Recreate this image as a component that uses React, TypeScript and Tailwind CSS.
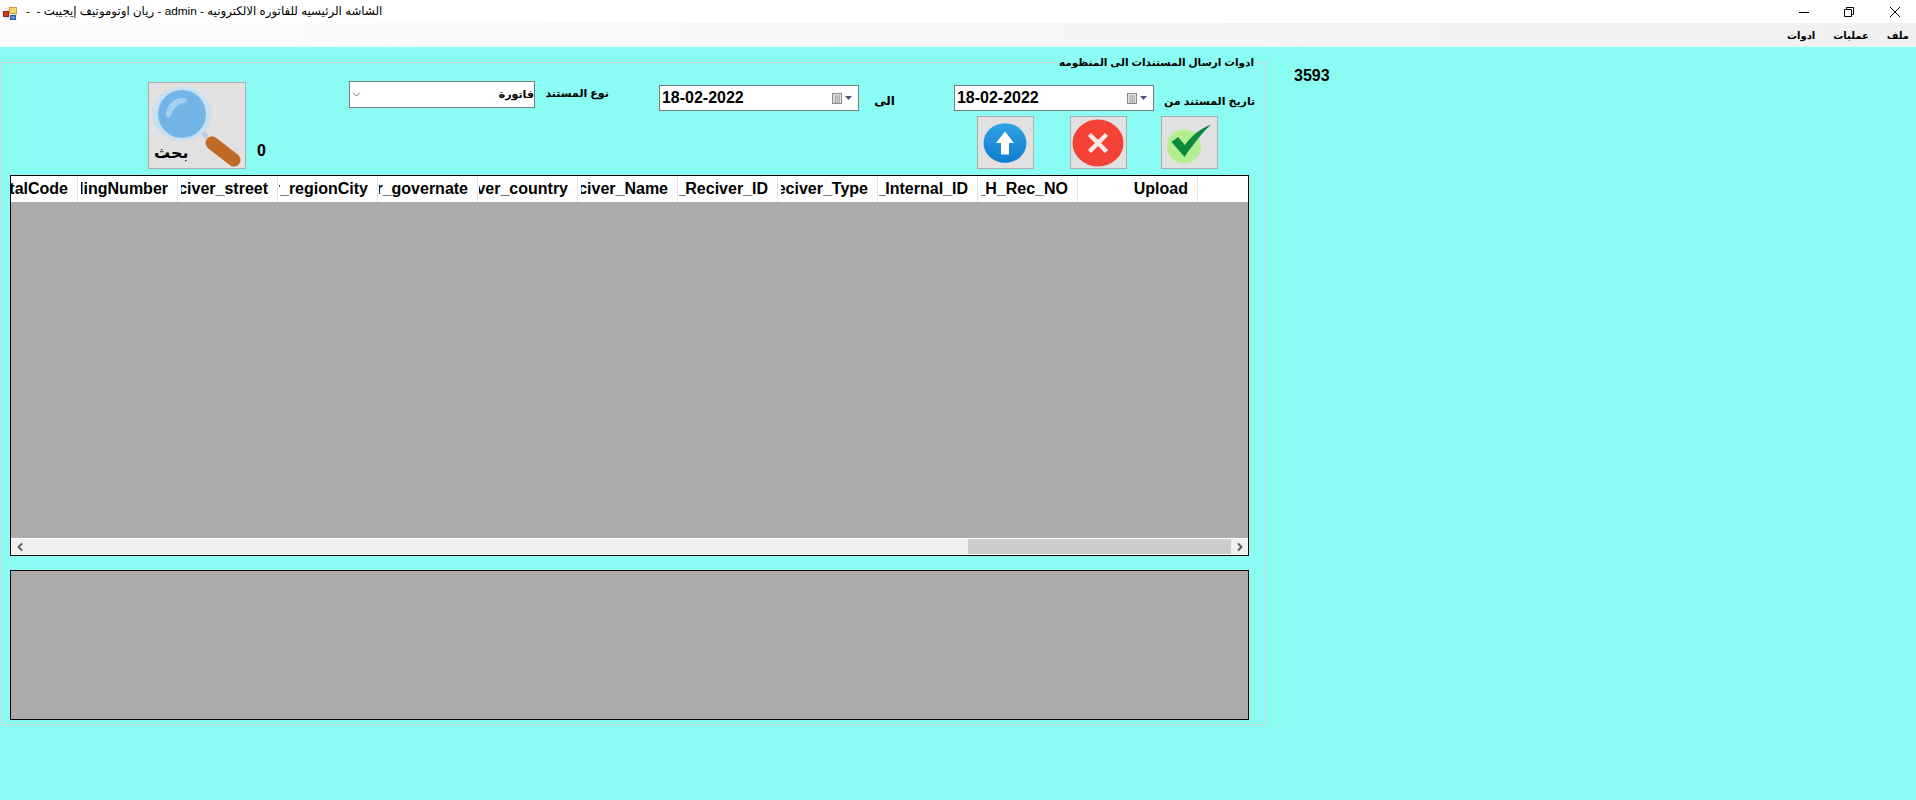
import { ChevronDown, ChevronLeft, ChevronRight } from 'lucide-react';

const font = 'font-["Liberation_Sans","DejaVu_Sans",sans-serif]';

const columns = [
    { label: 'Reciver_postalCode', width: 'w-[67px]', inset: 'pl-0' },
    { label: 'Reciver_buildingNumber', width: 'w-[100px]', inset: 'pl-[3px]' },
    { label: 'Reciver_street', width: 'w-[100px]', inset: 'pl-[3px]' },
    { label: 'Reciver_regionCity', width: 'w-[100px]', inset: 'pl-[1px]' },
    { label: 'Reciver_governate', width: 'w-[100px]', inset: 'pl-[1px]' },
    { label: 'Reciver_country', width: 'w-[100px]', inset: 'pl-[1px]' },
    { label: 'Reciver_Name', width: 'w-[100px]', inset: 'pl-[3px]' },
    { label: 'H_Reciver_ID', width: 'w-[100px]', inset: 'pl-[1px]' },
    { label: 'H_Reciver_Type', width: 'w-[100px]', inset: 'pl-[3px]' },
    { label: 'H_Internal_ID', width: 'w-[100px]', inset: 'pl-[1px]' },
    { label: 'H_H_Rec_NO', width: 'w-[100px]', inset: 'pl-[3px]' },
    { label: 'Upload', width: 'w-[120px]', inset: 'pl-[3px]' },
];

const AppIcon = () => (
    <svg width="16" height="16" viewBox="0 0 16 16" className="shrink-0">
        <rect x="2.5" y="3.5" width="12" height="12" fill="#e8e8e8" />
        <rect x="7.5" y="3.5" width="7" height="6" fill="#f5d76a" stroke="#c9a23c" />
        <rect x="1.5" y="7.5" width="5" height="5" fill="#d9352c" stroke="#8c2a24" />
        <rect x="8.5" y="11.5" width="5" height="4" fill="#5a8fe0" stroke="#2d5ba0" />
    </svg>
);

const DatePicker = () => (
    <div className="w-[200px] h-[26px] bg-white border border-[#7a7a7a] flex items-center justify-between pl-[2px] pr-[6px] text-[16px] font-bold text-black">
        <span>18-02-2022</span>
        <span className="flex items-center gap-[3px]">
            <svg width="10" height="11" viewBox="0 0 10 11">
                <rect x="0.5" y="0.5" width="9" height="10" fill="#e4e4e4" stroke="#8a8a8a" />
                <path d="M2 3h6M2 5h6M2 7h6M2 9h6M3.5 2v8M5.5 2v8M7.5 2v8" stroke="#a8a8a8" strokeWidth="0.8" />
            </svg>
            <svg width="7" height="4" viewBox="0 0 7 4">
                <path d="M0 0h7L3.5 4z" fill="#4a5a78" />
            </svg>
        </span>
    </div>
);

const ToolButton = ({ children, className }: { children: React.ReactNode, className?: string }) => (
    <button className={`w-[57px] h-[53px] bg-[#e1e1e1] border border-[#adadad] flex items-center justify-center ${className ?? ''}`}>
        {children}
    </button>
);

export default function App() {
    return (
        <div className={`${font} w-[1916px] h-[800px] flex flex-col overflow-hidden bg-[#8afcf4]`}>
            {/* title bar */}
            <div className="h-[23px] bg-white flex items-center pl-[2px]">
                <AppIcon />
                <div dir="rtl" className="ml-[8px] text-[11.8px] text-black whitespace-pre">
                    الشاشه الرئيسيه للفاتوره الالكترونيه - admin - ريان اوتوموتيف إيجيبت -  -
                </div>
                <div className="ml-auto flex items-center h-full pr-[16px]">
                    <svg width="10" height="10" viewBox="0 0 10 10"><path d="M0 5.5h10" stroke="#000" /></svg>
                    <svg width="10" height="10" viewBox="0 0 10 10" fill="none" className="ml-[35px]">
                        <path d="M2.5 2.5V.5h7v7h-2M.5 2.5h7v7h-7z" stroke="#000" />
                    </svg>
                    <svg width="10" height="10" viewBox="0 0 10 10" className="ml-[36px]"><path d="M0 0l10 10M10 0L0 10" stroke="#000" /></svg>
                </div>
            </div>

            {/* menu */}
            <div dir="rtl" className="h-[24px] bg-gradient-to-l from-[#f0f0f0] to-[#fcfcfc] flex items-center pr-[7px] gap-[18px] text-[10px] font-bold text-black">
                <span>ملف</span>
                <span>عمليات</span>
                <span>ادوات</span>
            </div>

            <div className="flex-1 flex items-start pt-[15px] pl-[1px]">
                {/* group box */}
                <div className="relative w-[1265px] h-[663px] border border-[#cfd8d8] flex flex-col pl-[8px]">
                    <div dir="rtl" className="absolute right-[9px] -top-[8px] bg-[#8afcf4] px-[2px] text-[10.5px] font-bold text-black whitespace-nowrap">
                        ادوات ارسال المستندات الى المنظومه
                    </div>

                    <div className="h-[112px] flex items-start text-black">
                        <button className="mt-[19px] ml-[138px] w-[98px] h-[87px] bg-[#e1e1e1] border border-[#adadad] relative overflow-hidden">
                            <svg width="96" height="85" viewBox="0 0 96 85" className="absolute left-0 top-0">
                                <path d="M53 48l5 7" stroke="#b9cfdf" strokeWidth="5" />
                                <path d="M63 60l22 17" stroke="#bf6a26" strokeWidth="13" strokeLinecap="round" />
                                <ellipse cx="33" cy="31" rx="30" ry="27" fill="#c9e0f0" />
                                <circle cx="33" cy="31" r="24" fill="#74b5e8" />
                                <path d="M17 32a17 17 0 0 1 17-17c5 0 5 4 1 5-6 1-11 6-13 12-1 3-5 3-5 0z" fill="#a4d0f0" />
                            </svg>
                            <span dir="rtl" className="absolute left-[5px] bottom-[7px] text-[16px] leading-none font-bold">بحث</span>
                        </button>
                        <span className="mt-[80px] ml-[11px] text-[16px] font-bold leading-none">0</span>

                        <div dir="rtl" className="mt-[18px] ml-[83px] w-[186px] h-[27px] bg-white border border-[#7a7a7a] flex items-center justify-between text-[11px] font-bold">
                            <span>فاتورة</span>
                            <ChevronDown size={13} strokeWidth={1.2} className="text-[#333]" />
                        </div>
                        <span dir="rtl" className="mt-[22px] ml-[10px] w-[64px] text-[11px] font-bold whitespace-nowrap">نوع المستند</span>
                        <div className="mt-[22px] ml-[50px]"><DatePicker /></div>
                        <span dir="rtl" className="mt-[29px] ml-[16px] w-[20px] text-[12px] font-bold">الى</span>

                        <div className="mt-[22px] ml-[59px] flex flex-col">
                            <div className="flex items-start">
                                <DatePicker />
                                <span dir="rtl" className="mt-[8px] ml-[10px] text-[11px] font-bold whitespace-nowrap">تاريخ المستند من</span>
                            </div>
                            <div className="mt-[5px] ml-[23px] flex">
                                <ToolButton>
                                    <svg width="44" height="40" viewBox="0 0 44 40">
                                        <defs>
                                            <linearGradient id="up" x1="0" y1="0" x2="0" y2="1">
                                                <stop offset="0" stopColor="#2fa2e4" />
                                                <stop offset="1" stopColor="#0f7ccd" />
                                            </linearGradient>
                                        </defs>
                                        <ellipse cx="22" cy="20" rx="21.5" ry="19.7" fill="url(#up)" />
                                        <path d="M22 8.5L31 20h-5v11.5h-8V20h-5z" fill="#fff" />
                                    </svg>
                                </ToolButton>
                                <ToolButton className="ml-[36px]">
                                    <svg width="52" height="48" viewBox="0 0 52 48">
                                        <ellipse cx="26" cy="24" rx="25.5" ry="23.5" fill="#f44336" />
                                        <path d="M17.5 15.5l17 17M34.5 15.5l-17 17" stroke="#fbe9e7" strokeWidth="4.5" />
                                    </svg>
                                </ToolButton>
                                <ToolButton className="ml-[34px]">
                                    <svg width="50" height="46" viewBox="0 0 50 46">
                                        <circle cx="20" cy="26.5" r="17" fill="#b4ee90" />
                                        <path d="M7.5 22L14 17l7 8C27 16 36 9 47 4.500C37 14 28 26 20.500 37z" fill="#0a8a3c" />
                                    </svg>
                                </ToolButton>
                            </div>
                        </div>
                    </div>

                    {/* top grid */}
                    <div className="w-[1239px] h-[381px] border border-black bg-[#ababab] flex flex-col">
                        <div className="h-[26px] bg-white flex shrink-0">
                            {columns.map((col) => (
                                <div key={col.label} className={`${col.width} ${col.inset} shrink-0 border-r border-[#e4e4e4]`}>
                                    <div className="h-full overflow-hidden flex justify-end items-center pr-[9px] text-[16px] font-bold text-black">
                                        <span className="shrink-0 whitespace-nowrap">{col.label}</span>
                                    </div>
                                </div>
                            ))}
                        </div>
                        <div className="flex-1" />
                        <div className="h-[17px] shrink-0 bg-[#f0f0f0] border-y border-white flex items-center">
                            <div className="w-[17px] flex justify-center">
                                <ChevronLeft size={12} strokeWidth={4} className="text-[#606060]" />
                            </div>
                            <div className="ml-[940px] w-[263px] h-[15px] bg-[#cdcdcd]" />
                            <div className="w-[17px] flex justify-center">
                                <ChevronRight size={12} strokeWidth={4} className="text-[#606060]" />
                            </div>
                        </div>
                    </div>

                    {/* bottom grid */}
                    <div className="mt-[14px] w-[1239px] h-[150px] border border-black bg-[#ababab]" />
                </div>

                <span className="ml-[28px] mt-[6px] text-[16px] font-bold text-black leading-none">3593</span>
            </div>
        </div>
    );
}
